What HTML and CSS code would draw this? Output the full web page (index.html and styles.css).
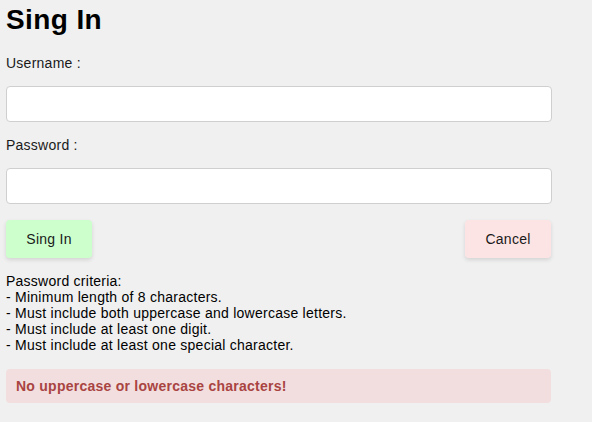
FILE: index.html
```html
<!DOCTYPE html>
<html>
<head>
<meta charset="utf-8">
<title>Sing In</title>
<link rel="stylesheet" href="styles.css">
</head>
<body>
<form class="form">
  <h1 class="title">Sing In</h1>
  <label class="label" for="username">Username :</label>
  <input class="input" id="username" type="text">
  <label class="label" for="password">Password :</label>
  <input class="input" id="password" type="password">
  <div class="actions">
    <button type="button" class="btn btn-primary">Sing In</button>
    <button type="button" class="btn btn-cancel">Cancel</button>
  </div>
  <div class="criteria">
    Password criteria:<br>
    - Minimum length of 8 characters.<br>
    - Must include both uppercase and lowercase letters.<br>
    - Must include at least one digit.<br>
    - Must include at least one special character.
  </div>
  <div class="error">No uppercase or lowercase characters!</div>
</form>
</body>
</html>
```
FILE: styles.css
```css
html, body {
  margin: 0;
  padding: 0;
  background: #f0f0f0;
}
body {
  font-family: "Liberation Sans", Arial, sans-serif;
  font-size: 14px;
  letter-spacing: 0.25px;
  color: #111;
}
.form {
  width: 546px;
  padding: 4px 0 0 6px;
  display: flex;
  flex-direction: column;
}
.title {
  margin: 0;
  font-size: 28px;
  line-height: 32px;
  font-weight: bold;
  letter-spacing: 0.4px;
  color: #000;
}
.label {
  display: block;
  margin-top: 19px;
  line-height: 16px;
  color: #1a1a1a;
}
.input + .label {
  margin-top: 15px;
}
.input {
  box-sizing: border-box;
  margin: 15px 0 0 0;
  width: 546px;
  height: 36px;
  border: 1px solid #cfcfcf;
  border-radius: 4px;
  background: #fff;
  padding: 0 8px;
  font: inherit;
}
.actions {
  margin-top: 16px;
  display: flex;
  justify-content: space-between;
  padding-right: 1px;
}
.btn {
  width: 86px;
  height: 38px;
  border: none;
  border-radius: 4px;
  font-family: inherit;
  font-size: 14px;
  letter-spacing: 0.25px;
  color: #1a1a1a;
  box-shadow: 0 2px 4px rgba(0, 0, 0, 0.12);
  padding: 0;
}
.btn-primary {
  background: #ccffcc;
}
.btn-cancel {
  background: #fde4e4;
}
.criteria {
  margin-top: 15px;
  line-height: 16px;
  color: #000;
}
.error {
  margin-top: 16px;
  width: 545px;
  box-sizing: border-box;
  height: 34px;
  line-height: 34px;
  padding: 0 10px;
  background: #f2dede;
  color: #a94442;
  font-weight: bold;
  border-radius: 4px;
}
```
